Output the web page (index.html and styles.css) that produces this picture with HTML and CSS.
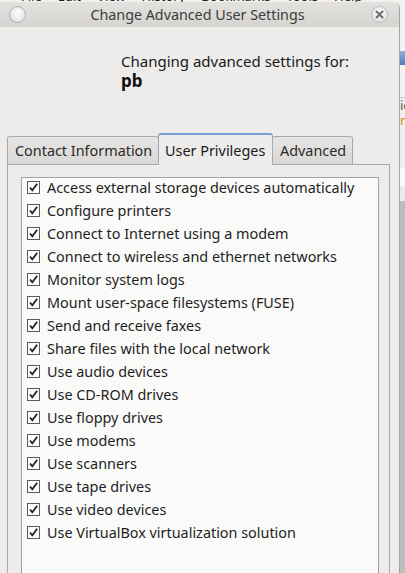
FILE: index.html
```html
<!DOCTYPE html>
<html>
<head>
<meta charset="utf-8">
<link rel="stylesheet" href="styles.css">
</head>
<body>
<div class="menustrip"><div class="menutext"><span>File</span><span>Edit</span><span>View</span><span>History</span><span>Bookmarks</span><span>Tools</span><span>Help</span></div></div>
<div class="screen">
  <div class="window">
    <div class="titlebar">
      <div class="btn-round"></div>
      <div class="title">Change Advanced User Settings</div>
      <div class="btn-close">
        <svg width="17" height="17" viewBox="0 0 17 17"><path d="M5.5 5.5 L11.5 11.5 M11.5 5.5 L5.5 11.5" stroke="#6b6b6b" stroke-width="2" stroke-linecap="round"/></svg>
      </div>
    </div>
    <div class="header">
      <div class="header-label">Changing advanced settings for:</div>
      <div class="header-user">pb</div>
    </div>
    <div class="notebook">
      <div class="tabs">
        <div class="tab tab-contact">Contact Information</div>
        <div class="tab tab-active">User Privileges</div>
        <div class="tab tab-adv">Advanced</div>
      </div>
      <div class="panel">
        <div class="list">
          <div class="item"><span class="cb"></span>Access external storage devices automatically</div>
          <div class="item"><span class="cb"></span>Configure printers</div>
          <div class="item"><span class="cb"></span>Connect to Internet using a modem</div>
          <div class="item"><span class="cb"></span>Connect to wireless and ethernet networks</div>
          <div class="item"><span class="cb"></span>Monitor system logs</div>
          <div class="item"><span class="cb"></span>Mount user-space filesystems (FUSE)</div>
          <div class="item"><span class="cb"></span>Send and receive faxes</div>
          <div class="item"><span class="cb"></span>Share files with the local network</div>
          <div class="item"><span class="cb"></span>Use audio devices</div>
          <div class="item"><span class="cb"></span>Use CD-ROM drives</div>
          <div class="item"><span class="cb"></span>Use floppy drives</div>
          <div class="item"><span class="cb"></span>Use modems</div>
          <div class="item"><span class="cb"></span>Use scanners</div>
          <div class="item"><span class="cb"></span>Use tape drives</div>
          <div class="item"><span class="cb"></span>Use video devices</div>
          <div class="item"><span class="cb"></span>Use VirtualBox virtualization solution</div>
        </div>
      </div>
    </div>
  </div>
  <div class="bgwin">
    <div class="bg-a"></div>
    <div class="bg-blue"></div>
    <div class="bg-b"></div>
    <div class="bg-text"><div>ie</div><div class="bg-orange">n</div></div>
    <div class="bg-c"></div>
    <div class="bg-light"></div>
    <div class="bg-d"></div>
    <div class="bg-gray"></div>
  </div>
</div>
</body>
</html>
```
FILE: styles.css
```css
* { box-sizing: border-box; }
html, body {
  margin: 0;
  padding: 0;
}
body {
  width: 405px;
  height: 573px;
  overflow: hidden;
  background: #f2f1f0;
  font-family: "Noto Sans", "DejaVu Sans", sans-serif;
  color: #3c3c3c;
}
.menustrip {
  height: 2px;
  overflow: hidden;
  background: #f2f1f0;
}
.menutext {
  margin-top: -11px;
  padding-left: 21px;
  font-size: 13px;
  line-height: 14px;
  color: #222;
  display: flex;
  gap: 16px;
}
.screen {
  display: flex;
  height: 571px;
}
.window {
  width: 400px;
  flex: none;
  background: #edeceb;
  border-right: 1px solid #a2a2a0;
  border-top-right-radius: 6px;
  overflow: hidden;
}
.titlebar {
  height: 25px;
  background: linear-gradient(#e3e2df, #d5d4d1);
  display: flex;
  align-items: center;
  padding: 0 9px 0 9px;
}
.btn-round {
  width: 17px;
  height: 17px;
  border-radius: 50%;
  border: 1px solid #a9b0bb;
  background: radial-gradient(circle at 50% 35%, #fdfdfd, #e6e6e6 70%);
  box-shadow: inset 0 0 0 1px #e0e4ea;
  margin-top: -1px;
}
.title {
  flex: 1;
  text-align: center;
  font-size: 14.3px;
  color: #3c3c3c;
  padding-right: 2px;
}
.btn-close {
  width: 17px;
  height: 17px;
  border-radius: 50%;
  border: 1px solid #b4b9c2;
  background: radial-gradient(circle at 50% 35%, #ffffff, #e2e2e2 75%);
  margin-top: -1px;
  margin-right: 2px;
  display: flex;
  align-items: center;
  justify-content: center;
}
.btn-close svg {
  display: block;
  margin: -1px;
}
.header {
  padding: 25px 0 0 121px;
  height: 106px;
}
.header-label {
  font-size: 15px;
  line-height: 18px;
  color: #1a1a1a;
}
.header-user {
  font-size: 17px;
  font-weight: bold;
  line-height: 22px;
  color: #111;
}
.notebook {
  padding-left: 7px;
  width: 390px;
}
.tabs {
  display: flex;
  align-items: flex-end;
  height: 31px;
  position: relative;
  z-index: 1;
}
.tab {
  height: 28px;
  font-size: 14.4px;
  line-height: 26px;
  padding-top: 1px;
  color: #2a2a2a;
  border: 1px solid #a9a9a9;
  border-bottom: none;
  border-radius: 3px 3px 0 0;
  background: linear-gradient(#e6e5e3, #d9d8d6);
  white-space: nowrap;
}
.tab-contact {
  width: 152px;
  padding-left: 7px;
}
.tab-active {
  width: 115px;
  height: 32px;
  margin-bottom: -1px;
  padding-left: 6px;
  padding-top: 0;
  line-height: 31px;
  background: #edeceb;
  border-color: #9aa6b6;
  border-top: 2px solid #7a9fcf;
  margin-left: -1px;
  margin-right: -1px;
  color: #1a1a1a;
}
.tab-adv {
  width: 81px;
  padding-left: 7px;
}
.panel {
  border: 1px solid #a9a9a9;
  border-bottom: none;
  padding: 12px 12px 0 13px;
  height: 420px;
}
.list {
  width: 358px;
  height: 420px;
  background: #fafaf9;
  border: 1px solid #a3a3a3;
}
.item {
  height: 23px;
  display: flex;
  align-items: center;
  font-size: 14.4px;
  color: #1e1e1e;
  padding-left: 5px;
  padding-bottom: 4px;
  white-space: nowrap;
}
.cb {
  width: 13px;
  height: 13px;
  flex: none;
  margin-right: 7px;
  margin-top: -1px;
  border: 1px solid #5a5a5a;
  background: #fdfdfd url("data:image/svg+xml,%3Csvg xmlns='http://www.w3.org/2000/svg' width='11' height='11' viewBox='0 0 11 11'%3E%3Cpath d='M2 5.5 L4.3 8.3 L9.2 1.8' fill='none' stroke='%23222' stroke-width='1.8'/%3E%3C/svg%3E") center/11px 11px no-repeat;
}
.bgwin {
  flex: 1;
  display: flex;
  flex-direction: column;
  background: #f0efee;
}
.bg-a { height: 49px; background: #f3f3f3; }
.bg-blue { height: 14px; background: linear-gradient(#8fb0d8, #4f7fba); }
.bg-b { height: 33px; background: #f3f3f3; border-bottom: 1px solid #c8c8c8; }
.bg-text { height: 30px; font-size: 13px; line-height: 15px; color: #555; overflow: hidden; }
.bg-orange { color: #d08a1a; }
.bg-c { height: 40px; background: #eeeeec; }
.bg-light { height: 18px; background: #fafafa; }
.bg-d { height: 15px; background: #ecebea; }
.bg-gray { flex: 1; background: #bdbdbd; }
```
